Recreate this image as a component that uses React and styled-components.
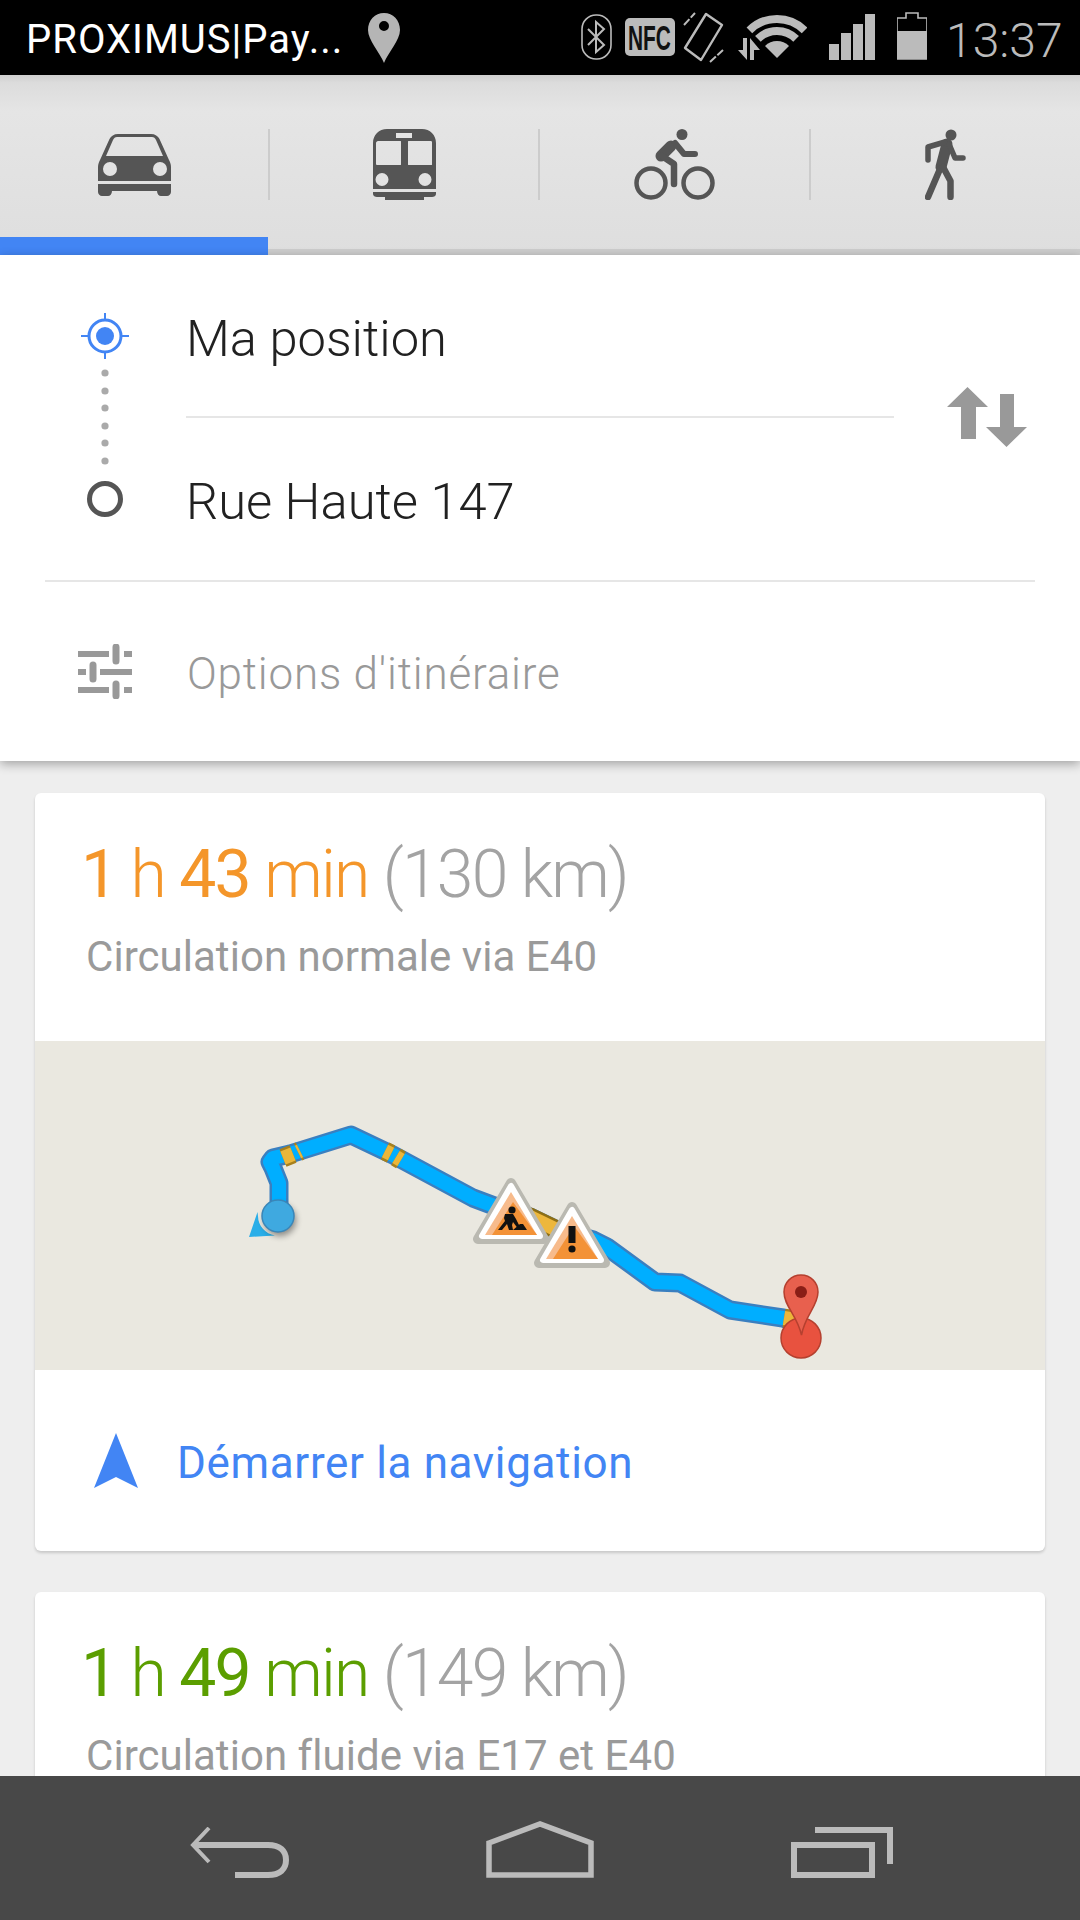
import React from "react";
import styled, { createGlobalStyle } from "styled-components";

const GlobalStyle = createGlobalStyle`
  html, body {
    margin: 0;
    padding: 0;
    background: #eeeeee;
  }
  * {
    box-sizing: border-box;
  }
`;

const Screen = styled.div`
  width: 1080px;
  height: 1920px;
  display: flex;
  flex-direction: column;
  overflow: hidden;
  background: #eeeeee;
  font-family: "Roboto", "Liberation Sans", sans-serif;
`;

/* status bar */
const StatusBar = styled.div`
  height: 75px;
  flex: none;
  display: flex;
  align-items: center;
  background: #000;
  padding: 0 20px 0 26px;
`;

const Carrier = styled.span`
  flex: none;
  color: #fff;
  font-size: 40px;
  letter-spacing: 1px;
  padding-top: 4px;
  white-space: nowrap;
  width: 342px;
`;

const StatusIcon = styled.svg`
  height: 75px;
  flex: none;
  margin-left: ${(p) => p.$gap}px;
  color: #bbbbbb;
`;

const Clock = styled.span`
  flex: none;
  color: #bbbbbb;
  font-size: 48px;
  font-weight: 300;
  padding-top: 6px;
  margin-left: 19px;
`;

/* travel mode tabs */
const Tabs = styled.div`
  height: 180px;
  flex: none;
  display: grid;
  grid-template-columns: 270px 270px 271px 269px;
  background: linear-gradient(#cfcfcf 0, #dcdcdc 8px, #e5e5e5 36px, #dedede 180px);
`;

const Tab = styled.div`
  padding-top: 54px;
  background: ${(p) =>
    p.$active
      ? "linear-gradient(#4285f4, #4285f4) 0 100% / 268px 18px no-repeat,"
      : ""} linear-gradient(#cdcdcd, #cdcdcd) 0 100% / 100% 6px no-repeat;
`;

const TabCell = styled.div`
  height: 71px;
  display: flex;
  align-items: center;
  justify-content: center;
  border-right: ${(p) => (p.$last ? "none" : "2px solid #cccccc")};
  color: #555555;
`;

/* origin and destination */
const Panel = styled.div`
  height: 506px;
  flex: none;
  background: #fff;
  position: relative;
  z-index: 1;
  box-shadow: 0 3px 10px rgba(0, 0, 0, 0.32);
`;

const RouteBlock = styled.div`
  height: 325px;
  display: flex;
  padding-left: 81px;
`;

const Rail = styled.svg`
  flex: none;
  width: 48px;
  height: 205px;
  margin: 58px 57px 0 0;
`;

const Fields = styled.div`
  width: 708px;
  flex: none;
`;

const Field = styled.div`
  height: ${(p) => (p.$first ? "163px" : "160px")};
  padding-top: 56px;
  font-size: 50.7px;
  line-height: 56px;
  font-weight: 300;
  color: #212121;
  border-bottom: ${(p) => (p.$first ? "2px solid #e6e6e6" : "none")};
`;

const SwapIcon = styled.svg`
  flex: none;
  width: 80px;
  height: 60px;
  margin: 132px 0 0 53px;
`;

const Divider = styled.div`
  height: 2px;
  margin: 0 45px;
  background: #e6e6e6;
`;

const OptionsRow = styled.div`
  height: 179px;
  display: flex;
  align-items: center;
  padding-left: 78px;
`;

const OptionsLabel = styled.span`
  margin-left: 55px;
  padding-top: 5px;
  font-size: 44px;
  letter-spacing: 0.8px;
  font-weight: 300;
  color: #999999;
`;

/* results */
const Results = styled.div`
  flex: 1;
  min-height: 0;
  overflow: hidden;
  display: flex;
  flex-direction: column;
  gap: 41px;
  padding: 32px 35px 0;
`;

const Card = styled.div`
  flex: none;
  background: #fff;
  border-radius: 6px;
  box-shadow: 0 2px 3px rgba(0, 0, 0, 0.16);
  overflow: hidden;
`;

const CardInfo = styled.div`
  height: 248px;
  padding: 44px 0 0 46px;
`;

const Duration = styled.div`
  font-size: 66px;
  line-height: 76px;
  font-weight: 300;
  letter-spacing: -1.8px;
  color: ${(p) => p.$color};
  white-space: nowrap;
`;

const Strong = styled.span`
  font-weight: 400;
`;

const Distance = styled.span`
  color: #a3a3a3;
`;

const Via = styled.div`
  margin: 19px 0 0 5px;
  font-size: 42px;
  line-height: 50px;
  letter-spacing: 0.04px;
  color: #9a9a9a;
  white-space: nowrap;
`;

const MapPreview = styled.svg`
  display: block;
  width: 1010px;
  height: 329px;
  background: #eae8e0;
`;

const StartRow = styled.div`
  height: 181px;
  display: flex;
  align-items: center;
  padding-left: 59px;
`;

const StartLabel = styled.span`
  margin-left: 39px;
  padding-top: 5px;
  font-size: 44px;
  letter-spacing: 0.65px;
  color: #4285f4;
`;

/* system navigation */
const NavBar = styled.div`
  height: 144px;
  flex: none;
  display: flex;
  align-items: flex-end;
  justify-content: center;
  gap: 197px;
  padding: 0 0 42px 3px;
  background: #484848;
  position: relative;
  z-index: 2;
`;

const CarIcon = () => (
  <svg width="73" height="62" viewBox="0 0 73 62">
    <path
      fill="currentColor"
      fillRule="evenodd"
      d="M20 0H53C57 0 60 2 61.5 5L71 26C72 28 73 30 73 33V47H0V33C0 30 1 28 2 26L11.5 5C13 2 16 0 20 0ZM19 3C17 3 16 4 15 6L8 22H65L58 6C57 4 56 3 54 3ZM12 28A7 7 0 1 0 12 42A7 7 0 1 0 12 28ZM62 28A7 7 0 1 0 62 42A7 7 0 1 0 62 28Z"
    />
    <path
      fill="currentColor"
      d="M0 50H73V58C73 60 71 62 69 62H63C61 62 59 60 59 57H14C14 60 12 62 10 62H4C2 62 0 60 0 58Z"
    />
  </svg>
);

const BusIcon = () => (
  <svg width="63" height="71" viewBox="0 0 63 71">
    <path
      fill="currentColor"
      fillRule="evenodd"
      d="M0 14C0 6 6 0 14 0H49C57 0 63 6 63 14V60H0ZM23 4V9H39V4ZM5 12C4 12 3 13 3 14V35C3 36 4 36 5 36H27C28 36 28 36 28 35V13C28 12 28 12 27 12ZM36 12C35 12 35 12 35 13V35C35 36 35 36 36 36H58C59 36 59 36 59 35V14C59 13 59 12 58 12ZM9 44A6.5 6.5 0 1 0 9 57A6.5 6.5 0 1 0 9 44ZM52 44A6.5 6.5 0 1 0 52 57A6.5 6.5 0 1 0 52 44Z"
    />
    <path fill="currentColor" d="M0 63H63V65C63 67 61 68 59 68H51V71H12V68H4C2 68 0 67 0 65Z" />
  </svg>
);

const BikeIcon = () => (
  <svg width="81" height="71" viewBox="0 0 81 71" fill="none" stroke="currentColor" strokeLinecap="round" strokeLinejoin="round">
    <circle cx="48" cy="5.5" r="5.5" fill="currentColor" stroke="none" />
    <circle cx="17" cy="54" r="14.5" strokeWidth="4.5" />
    <circle cx="64" cy="54" r="14.5" strokeWidth="4.5" />
    <path d="M37 17L27 27" strokeWidth="11" />
    <path d="M28 27L40 35V55" strokeWidth="6.5" />
    <path d="M41 14L50 25H61" strokeWidth="6" />
  </svg>
);

const WalkIcon = () => (
  <svg width="41" height="71" viewBox="0 0 41 71" fill="none" stroke="currentColor" strokeLinecap="round" strokeLinejoin="round">
    <circle cx="26" cy="6" r="5.5" fill="currentColor" stroke="none" />
    <path d="M22 15L16 38" strokeWidth="11" />
    <path d="M20 13L3 18V31" strokeWidth="5.5" />
    <path d="M24 15L30 29H38" strokeWidth="5.5" />
    <path d="M15 40L3 68" strokeWidth="6.5" />
    <path d="M18 38L25.5 52V68" strokeWidth="6.5" />
  </svg>
);

const RouteRail = () => (
  <Rail viewBox="0 0 48 205">
    <g stroke="#4285f4" fill="none">
      <circle cx="24" cy="23" r="16" strokeWidth="3" />
      <path d="M24 0V7M24 39V46M0 23H8M40 23H48" strokeWidth="2" />
    </g>
    <circle cx="24" cy="23" r="9" fill="#4285f4" />
    {[60, 78, 95, 113, 130, 148].map((y) => (
      <circle key={y} cx="24" cy={y} r="3.6" fill="#aaaaaa" />
    ))}
    <circle cx="24" cy="186" r="15.5" fill="none" stroke="#555555" strokeWidth="5" />
  </Rail>
);

const Swap = () => (
  <SwapIcon viewBox="0 0 80 60">
    <path fill="#999999" d="M20.5 0L41 20H29V52H14V20H0Z" />
    <path fill="#999999" d="M53 7H67V40H80L59.5 60L39 40H53Z" />
  </SwapIcon>
);

const OptionsIcon = () => (
  <svg width="54" height="55" viewBox="0 0 54 55" stroke="#999999" fill="none">
    <path d="M0 10H31M46 10H54M0 28H8M22 28H54M0 46H31M46 46H54" strokeWidth="6" />
    <path d="M38 3V17M15 21V35M38 40V52" strokeWidth="7" strokeLinecap="round" />
  </svg>
);

const Sign = ({ x, y, children }) => (
  <g transform={`translate(${x} ${y})`}>
    <polygon points="0,5 -33,61 33,61" fill="#bab9b1" stroke="#bab9b1" strokeWidth="10" strokeLinejoin="round" />
    <polygon points="0,8 -29,58 29,58" fill="#fff" stroke="#fff" strokeWidth="6" strokeLinejoin="round" />
    <polygon points="0,14 -26,57 26,57" fill="#f7bb8c" />
    <polygon points="2,24 -19,57 26,57" fill="#f39237" />
    {children}
  </g>
);

const routeLine = "279,1213 279,1183 273,1168 270,1162 273,1158 290,1154 351,1135 393,1155 473,1198 497,1207 530,1217 557,1230 593,1240 607,1247 655,1282 680,1283 730,1310 783,1318 803,1325";

const stripes = [
  "283,1158 293,1154",
  "298,1152 300,1151",
  "385,1151 391,1154",
  "396,1157 401,1160",
  "784,1318 796,1320",
];

const RouteMap = () => (
  <MapPreview viewBox="35 1041 1010 329">
    <defs>
      <filter id="markerShadow" x="-50%" y="-50%" width="200%" height="200%">
        <feGaussianBlur stdDeviation="3" />
      </filter>
    </defs>
    <polyline points={routeLine} fill="none" stroke="#3a7fc0" strokeWidth="19" strokeLinejoin="round" />
    <polyline points={routeLine} fill="none" stroke="#00aeff" strokeWidth="14" strokeLinejoin="round" />
    {stripes.map((s) => (
      <g key={s}>
        <polyline points={s} fill="none" stroke="#a8801c" strokeWidth="19" />
        <polyline points={s} fill="none" stroke="#eab63a" strokeWidth="14" />
      </g>
    ))}
    <polyline points="515,1212 530,1217 557,1230" fill="none" stroke="#8f6f14" strokeWidth="19" />
    <polyline points="515,1212 530,1217 557,1230" fill="none" stroke="#edb73c" strokeWidth="14" />

    <path d="M257.5 1212L249 1237L275 1235.5A20 20 0 0 1 258 1216Z" fill="#2aaee8" />
    <circle cx="280" cy="1220" r="16" fill="#000" opacity="0.4" filter="url(#markerShadow)" />
    <circle cx="278" cy="1216" r="16" fill="#3fa9e0" stroke="#3a86b8" strokeWidth="1.5" />

    <Sign x={511} y={1178}>
      <g fill="#111">
        <circle cx="1" cy="32" r="3.6" />
        <path d="M-6 36L2 36L5 41L10 51L8 52L2 44L1 47L2 52H-2L-4 46L-9 52H-13L-6 43L-7 40Z" />
        <path d="M2 52L9 46L12 46L16 52Z" />
      </g>
    </Sign>
    <Sign x={572} y={1202}>
      <rect x="-3.5" y="24" width="7" height="17" fill="#111" />
      <circle cx="0" cy="47" r="3.6" fill="#111" />
    </Sign>

    <circle cx="801" cy="1338" r="20" fill="#e8523f" stroke="#b5402f" strokeWidth="1.5" />
    <path
      fill="#e8604e"
      stroke="#b5402f"
      strokeWidth="1.5"
      d="M801 1275C791 1275 784 1283 784 1292C784 1306 797 1315 801.5 1335C805 1315 818 1306 818 1292C818 1283 811 1275 801 1275Z"
    />
    <circle cx="801" cy="1292" r="6" fill="#8a1e16" />
  </MapPreview>
);

const Result = ({ color, hours, minutes, km, via, children }) => (
  <Card>
    <CardInfo>
      <Duration $color={color}>
        <Strong>{hours}</Strong> h <Strong>{minutes}</Strong> min <Distance>({km} km)</Distance>
      </Duration>
      <Via>{via}</Via>
    </CardInfo>
    {children}
  </Card>
);

export default function App() {
  return (
    <Screen>
      <GlobalStyle />
      <StatusBar>
        <Carrier>PROXIMUS|Pay...</Carrier>
        <StatusIcon $gap={0} width="32" viewBox="368 0 32 75">
          <path
            fill="#b5b5b5"
            fillRule="evenodd"
            d="M384 13C375 13 368 20 368 30C368 40 380 53 384 63C388 53 400 40 400 30C400 20 393 13 384 13ZM384 21A5 5 0 1 1 384 31A5 5 0 1 1 384 21Z"
          />
        </StatusIcon>
        <StatusIcon $gap={181} width="31" viewBox="581 0 31 75">
          <rect x="582" y="15" width="29" height="44" rx="14" fill="none" stroke="currentColor" strokeWidth="1.6" />
          <path d="M588 29L604 45L596 52V22L604 29L588 45" fill="none" stroke="currentColor" strokeWidth="2" />
        </StatusIcon>
        <StatusIcon $gap={13} width="50" viewBox="625 0 50 75">
          <rect x="625" y="18" width="50" height="38" rx="5" fill="currentColor" />
          <text
            transform="translate(628 50) scale(0.58 1)"
            fontFamily="Liberation Sans"
            fontWeight="700"
            fontSize="36"
            fill="#111"
          >
            NFC
          </text>
        </StatusIcon>
        <StatusIcon $gap={7} width="42" viewBox="682 0 42 75">
          <path d="M706 14L722 25L701 60L685 48Z" fill="none" stroke="currentColor" strokeWidth="2.4" strokeLinejoin="round" />
          <path d="M684 25L695 13M710 62L723 50" fill="none" stroke="currentColor" strokeWidth="2" strokeDasharray="8 2" />
        </StatusIcon>
        <StatusIcon $gap={14} width="69" viewBox="738 0 69 75">
          <path d="M743 38H747V60L738 50H743Z" fill="currentColor" />
          <path d="M750 60V38L760 50H754V60Z" fill="currentColor" />
          <path d="M749.4 30.4A39 39 0 0 1 804.6 30.4" fill="none" stroke="currentColor" strokeWidth="8" />
          <path d="M757.9 38.9A27 27 0 0 1 796.1 38.9" fill="none" stroke="currentColor" strokeWidth="8" />
          <path d="M765 46A17 17 0 0 1 789 46L777 58Z" fill="currentColor" />
        </StatusIcon>
        <StatusIcon $gap={22} width="46" viewBox="829 0 46 75">
          <rect x="829" y="44" width="10" height="16" fill="currentColor" />
          <rect x="841" y="33" width="10" height="27" fill="currentColor" />
          <rect x="853" y="24" width="10" height="36" fill="currentColor" />
          <rect x="865" y="14" width="10" height="46" fill="currentColor" />
        </StatusIcon>
        <StatusIcon $gap={22} width="30" viewBox="897 0 30 75">
          <path d="M906 13H918V18H927V59H897V18H906Z" fill="none" stroke="currentColor" strokeWidth="1.6" />
          <rect x="897" y="31" width="30" height="28" fill="currentColor" />
        </StatusIcon>
        <Clock>13:37</Clock>
      </StatusBar>

      <Tabs>
        <Tab $active>
          <TabCell>
            <CarIcon />
          </TabCell>
        </Tab>
        <Tab>
          <TabCell>
            <BusIcon />
          </TabCell>
        </Tab>
        <Tab>
          <TabCell>
            <BikeIcon />
          </TabCell>
        </Tab>
        <Tab>
          <TabCell $last>
            <WalkIcon />
          </TabCell>
        </Tab>
      </Tabs>

      <Panel>
        <RouteBlock>
          <RouteRail />
          <Fields>
            <Field $first>Ma position</Field>
            <Field>Rue Haute 147</Field>
          </Fields>
          <Swap />
        </RouteBlock>
        <Divider />
        <OptionsRow>
          <OptionsIcon />
          <OptionsLabel>Options d'itinéraire</OptionsLabel>
        </OptionsRow>
      </Panel>

      <Results>
        <Result color="#f4962a" hours="1" minutes="43" km="130" via="Circulation normale via E40">
          <RouteMap />
          <StartRow>
            <svg width="44" height="55" viewBox="0 0 44 55">
              <path fill="#4285f4" d="M22 0L44 55L22 44L0 55Z" />
            </svg>
            <StartLabel>Démarrer la navigation</StartLabel>
          </StartRow>
        </Result>
        <Result color="#5b9e00" hours="1" minutes="49" km="149" via="Circulation fluide via E17 et E40" />
      </Results>

      <NavBar>
        <svg width="99" height="51" viewBox="0 0 99 51" fill="none" stroke="#bbbbbb">
          <path d="M19 1L3 18L19 35" strokeWidth="4" />
          <path d="M3 18H78C90 18 96 24 96 33C96 42 90 48 78 48H45" strokeWidth="6" />
        </svg>
        <svg width="108" height="57" viewBox="0 0 108 57" fill="none" stroke="#bbbbbb">
          <path d="M3 22L54 3L105 22V54H3Z" strokeWidth="5.5" />
        </svg>
        <svg width="102" height="51" viewBox="0 0 102 51" fill="none" stroke="#bbbbbb">
          <rect x="3" y="18" width="78" height="30" strokeWidth="6" />
          <path d="M24 3H99V37" strokeWidth="6" />
        </svg>
      </NavBar>
    </Screen>
  );
}
